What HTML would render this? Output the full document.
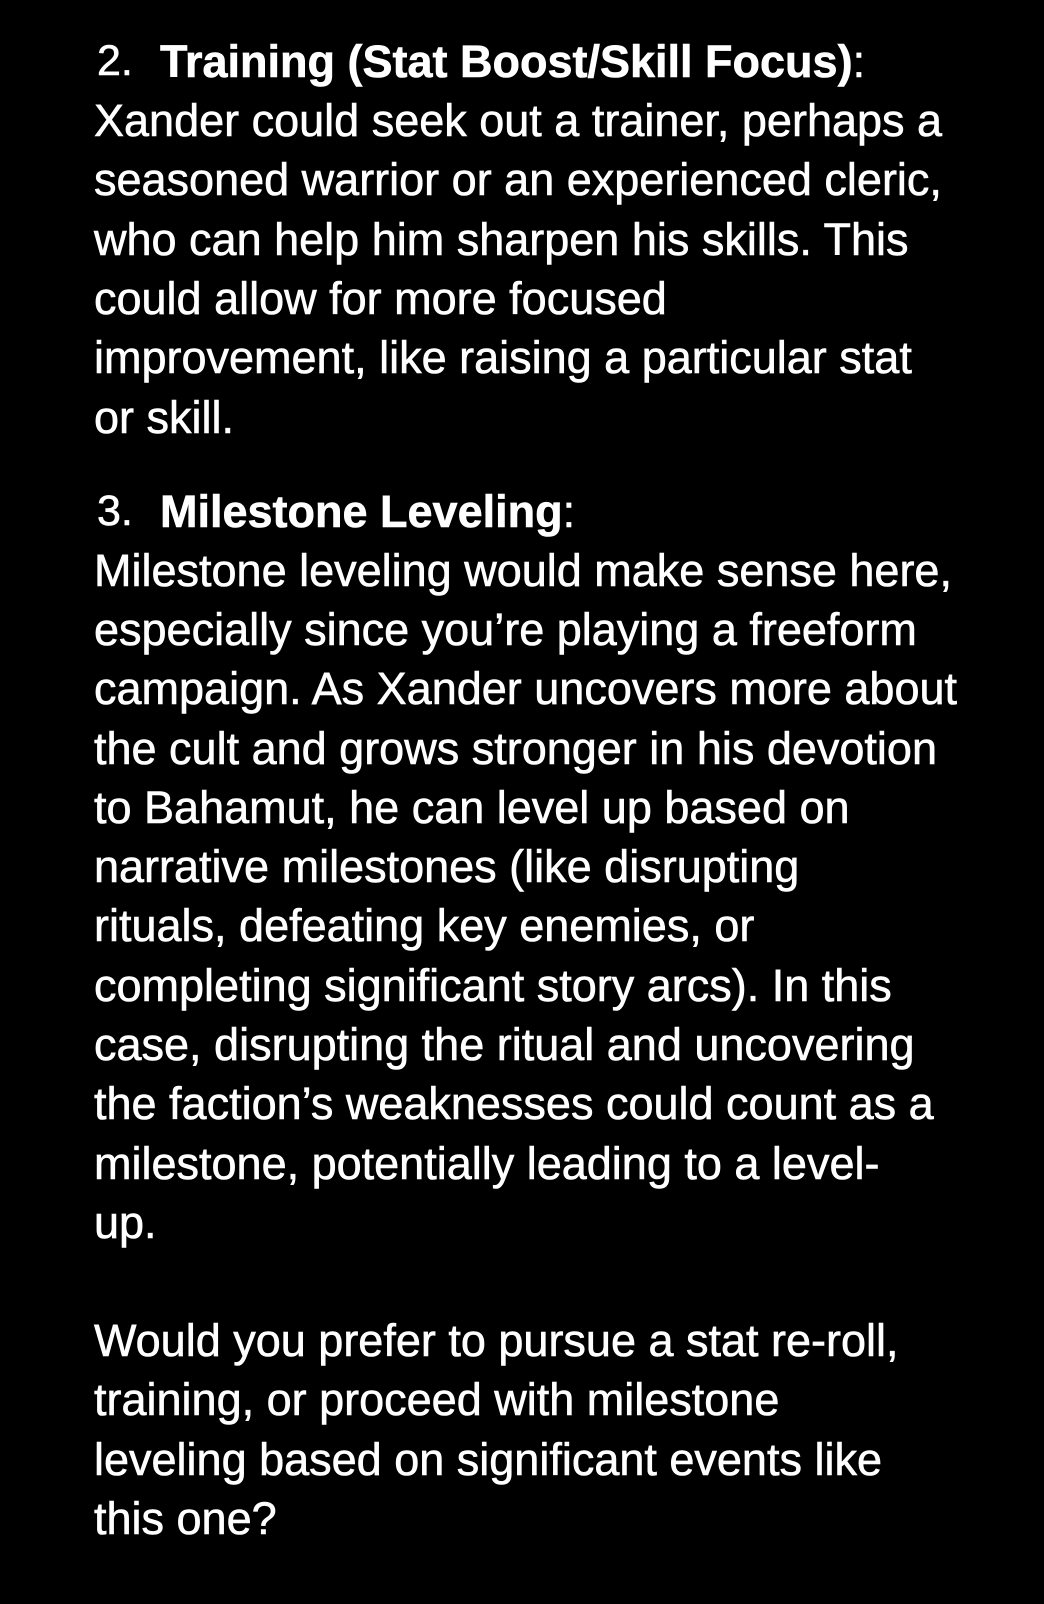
<!DOCTYPE html>
<html><head><style>
html,body{margin:0;padding:0;background:#000;}
body{width:1044px;height:1604px;overflow:hidden;position:relative;color:#fff;font-family:"Liberation Sans",sans-serif;font-size:45px;-webkit-text-stroke:0.6px #fff;}
.l{position:absolute;left:94px;white-space:nowrap;line-height:59px;height:59px;}
.n{position:absolute;left:97px;font-size:43px;}
.b{position:absolute;left:160px;font-weight:bold;}
</style></head><body>
<div class="l n" style="top:32px">2.</div>
<div class="l b" style="top:32px">Training (Stat Boost/Skill Focus)<span style="font-weight:normal">:</span></div>
<div class="l" style="top:91px">Xander could seek out a trainer, perhaps a</div>
<div class="l" style="top:150px">seasoned warrior or an experienced cleric,</div>
<div class="l" style="top:210px">who can help him sharpen his skills. This</div>
<div class="l" style="top:269px">could allow for more focused</div>
<div class="l" style="top:328px">improvement, like raising a particular stat</div>
<div class="l" style="top:388px">or skill.</div>

<div class="l n" style="top:482px">3.</div>
<div class="l b" style="top:482px">Milestone Leveling<span style="font-weight:normal">:</span></div>
<div class="l" style="top:541px">Milestone leveling would make sense here,</div>
<div class="l" style="top:600px">especially since you’re playing a freeform</div>
<div class="l" style="top:659px">campaign. As Xander uncovers more about</div>
<div class="l" style="top:719px">the cult and grows stronger in his devotion</div>
<div class="l" style="top:778px">to Bahamut, he can level up based on</div>
<div class="l" style="top:837px">narrative milestones (like disrupting</div>
<div class="l" style="top:896px">rituals, defeating key enemies, or</div>
<div class="l" style="top:956px">completing significant story arcs). In this</div>
<div class="l" style="top:1015px">case, disrupting the ritual and uncovering</div>
<div class="l" style="top:1074px">the faction’s weaknesses could count as a</div>
<div class="l" style="top:1134px">milestone, potentially leading to a level-</div>
<div class="l" style="top:1193px">up.</div>

<div class="l" style="top:1311px">Would you prefer to pursue a stat re-roll,</div>
<div class="l" style="top:1370px">training, or proceed with milestone</div>
<div class="l" style="top:1430px">leveling based on significant events like</div>
<div class="l" style="top:1489px">this one?</div>
</body></html>
